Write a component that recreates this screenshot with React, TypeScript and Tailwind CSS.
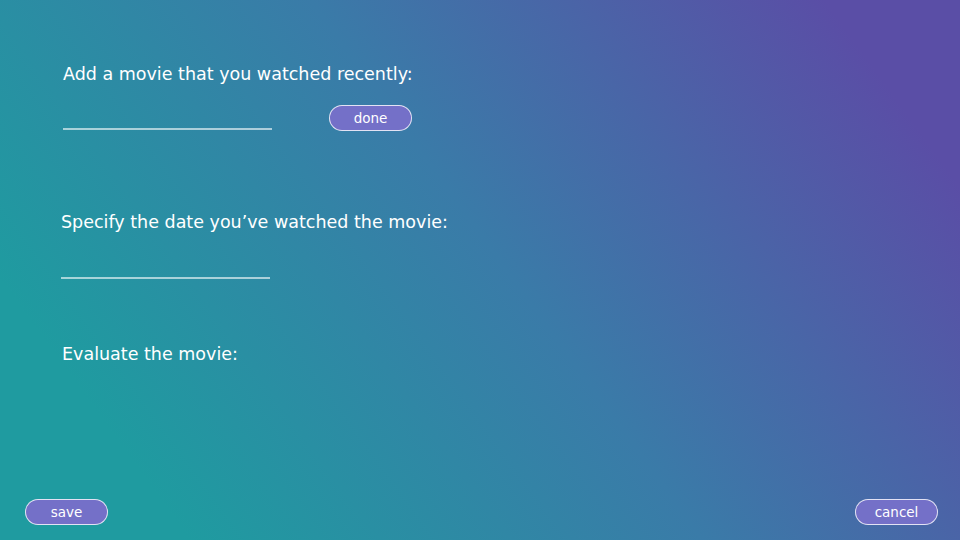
import React from "react";

export default function App() {
  const font = { fontFamily: '"DejaVu Sans", "Open Sans", sans-serif' };
  return (
    <div
      className="w-[960px] h-[540px] flex flex-col text-white bg-[linear-gradient(54deg,#1f9ba0_14%,#3a7ba8_52%,#5a4ea6_90%)]"
      style={font}
    >
      <div className="flex-1 flex flex-col">
        <div className="ml-[63px] mt-[63px] text-[17.5px] leading-[22px]">
          Add a movie that you watched recently:
        </div>
        <div className="flex items-end ml-[63px] mt-[20px]">
          <div className="w-[209px] h-[2px] bg-white/60 mb-[1px]" />
          <button className="ml-[57px] w-[83px] h-[26px] pt-[1px] rounded-full border border-white/80 bg-[#7470c8] text-[13.5px] leading-none text-white">
            done
          </button>
        </div>
        <div className="ml-[61px] mt-[80px] text-[17.5px] leading-[22px]">
          Specify the date you’ve watched the movie:
        </div>
        <div className="ml-[61px] mt-[44px] w-[209px] h-[2px] bg-white/60" />
        <div className="ml-[62px] mt-[64px] text-[17.5px] leading-[22px]">
          Evaluate the movie:
        </div>
      </div>
      <div className="flex justify-between pl-[25px] pr-[22px] pb-[15px]">
        <button className="w-[83px] h-[26px] pt-[1px] rounded-full border border-white/80 bg-[#7470c8] text-[13.5px] leading-none text-white">
          save
        </button>
        <button className="w-[83px] h-[26px] pt-[1px] rounded-full border border-white/80 bg-[#7470c8] text-[13.5px] leading-none text-white">
          cancel
        </button>
      </div>
    </div>
  );
}
